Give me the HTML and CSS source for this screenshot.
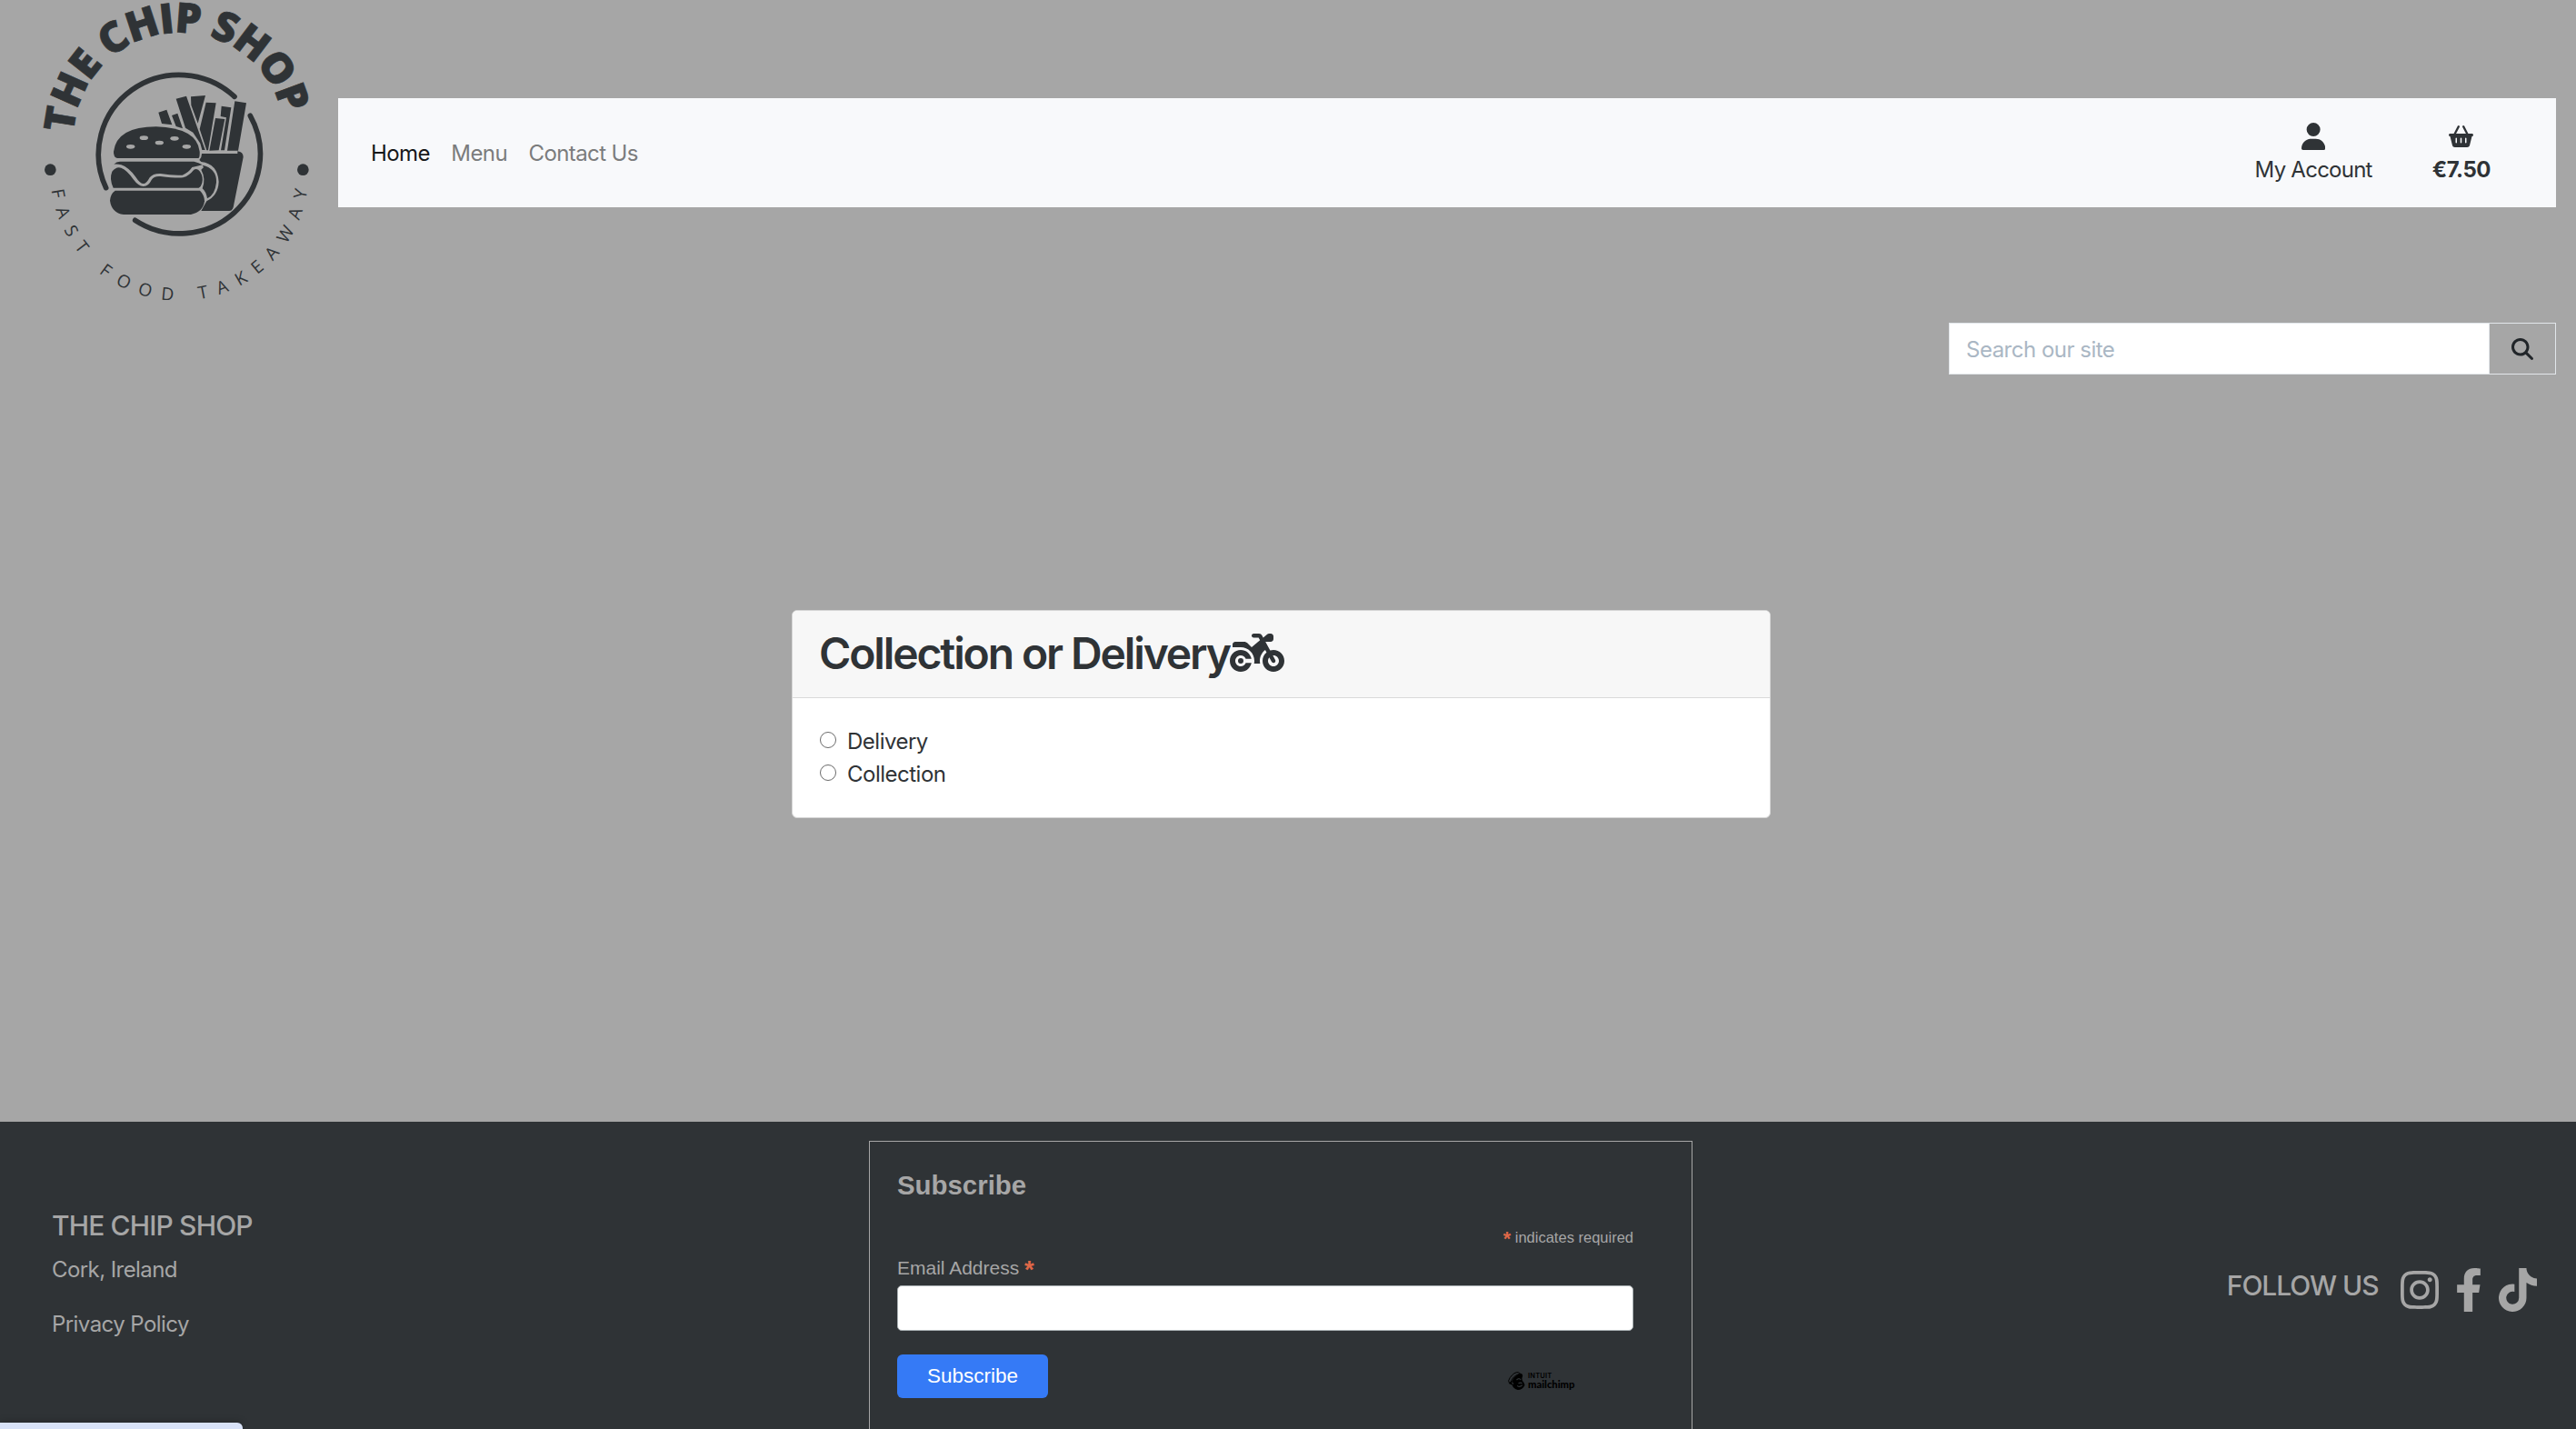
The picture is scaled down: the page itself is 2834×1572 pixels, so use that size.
FILE: index.html
```html
<!DOCTYPE html>
<html lang="en">
<head>
<meta charset="utf-8">
<title>The Chip Shop</title>
<link rel="stylesheet" href="styles.css">
</head>
<body>
<header class="site-header">
  <a class="logo" href="#">
    <svg viewBox="0 0 1116 1050" width="372" height="350" role="img" aria-label="The Chip Shop">
      <defs>
        <path id="arc-top" d="M243 457 A349 349 0 0 1 941 457"/>
        <path id="arc-bottom" d="M165 566 A427 427 0 0 0 1019 566"/>
      </defs>
      <text class="logo-name" textLength="1001"><textPath href="#arc-top" startOffset="16">THE CHIP SHOP</textPath></text>
      <text class="logo-tag" textLength="1218"><textPath href="#arc-bottom" startOffset="61">FAST FOOD TAKEAWAY</textPath></text>
      <circle class="ink" cx="166" cy="560" r="19"/>
      <circle class="ink" cx="1000" cy="560" r="19"/>
      <g class="ring">
        <path d="M350 620 A266 262 0 0 1 774 319"/>
        <path d="M826 382 A266 262 0 0 1 446 727"/>
      </g>
      <g class="ink">
        <path d="M523 371l27-9 18 50-34-4zM567 381l19-7 17 50-22-7zM581 326l34-9 62 178-10 0-6-22-24-36-25-15zM630 319l48-4-25 92-22-60zM680 338l33 2-26 156-5 0-23-70zM711 390l31 3-20 103-31 1zM731 350l32 5-22 141-12 0 18-108-19-4zM775 334l38 6-27 157-36 0z"/>
        <path d="M666 507H784V499Q803 502 803 518L770 684Q767 696 757 696H664L682 664Q720 645 722 600Q718 540 664 534L658 528Q666 520 666 507z"/>
        <path d="M668 545Q716 556 714 602Q710 642 684 655Q680 632 668 622Q680 590 664 560L672 552z"/>
        <path d="M387 522Q374 518 375 500Q386 418 515 418Q650 422 659 500Q660 518 655 522z"/>
        <path d="M376 542Q384 533 396 533H640Q656 536 668 544Q656 547 634 552Q622 570 602 578Q570 580 530 573Q505 572 494 586Q482 608 474 606Q462 606 448 584Q424 552 400 544Q388 541 376 542z"/>
        <path d="M374 620Q360 590 370 566Q384 548 400 554Q420 562 440 592Q458 616 474 615Q490 615 500 594Q508 580 530 582Q580 588 604 586Q624 580 640 560Q652 554 660 566Q672 584 667 604Q664 616 656 620z"/>
        <path d="M380 629H660Q675 644 675 664Q670 700 630 708H408Q368 702 363 662Q364 640 380 629z"/>
      </g>
      <g class="seeds">
        <ellipse cx="475" cy="455" rx="14" ry="7"/>
        <ellipse cx="526" cy="471" rx="14" ry="7"/>
        <ellipse cx="576" cy="457" rx="14" ry="7"/>
        <ellipse cx="431" cy="484" rx="14" ry="7"/>
        <ellipse cx="616" cy="484" rx="14" ry="7"/>
      </g>
    </svg>
  </a>
  <nav class="navbar">
    <ul class="nav-links">
      <li><a class="nav-link active" href="#">Home</a></li>
      <li><a class="nav-link" href="#">Menu</a></li>
      <li><a class="nav-link" href="#">Contact Us</a></li>
    </ul>
    <a class="nav-tool account" href="#">
      <svg viewBox="0 0 448 512" width="26.25" height="30"><path d="M224 256A128 128 0 1 0 224 0a128 128 0 1 0 0 256zm-45.7 48C79.8 304 0 383.8 0 482.3C0 498.7 13.3 512 29.7 512H418.3c16.4 0 29.7-13.3 29.7-29.7C448 383.8 368.2 304 269.7 304H178.3z"/></svg>
      <span>My Account</span>
    </a>
    <a class="nav-tool basket" href="#">
      <svg viewBox="0 0 576 512" width="27" height="24"><path d="M253.3 35.1c6.1-11.8 1.5-26.3-10.2-32.4s-26.3-1.5-32.4 10.2L117.6 192H32c-17.7 0-32 14.3-32 32s14.3 32 32 32L83.9 463.5C91 492 116.6 512 146 512H430c29.4 0 55-20 62.1-48.5L544 256c17.7 0 32-14.3 32-32s-14.3-32-32-32H458.4L365.3 12.9C359.2 1.2 344.7-3.4 332.9 2.7s-16.3 20.6-10.2 32.4L404.3 192H171.7L253.3 35.1zM192 304v96c0 8.8-7.2 16-16 16s-16-7.2-16-16V304c0-8.8 7.2-16 16-16s16 7.2 16 16zm96-16c8.8 0 16 7.2 16 16v96c0 8.8-7.2 16-16 16s-16-7.2-16-16V304c0-8.8 7.2-16 16-16zm128 16v96c0 8.8-7.2 16-16 16s-16-7.2-16-16V304c0-8.8 7.2-16 16-16s16 7.2 16 16z"/></svg>
      <strong>€7.50</strong>
    </a>
  </nav>
</header>
<form class="search">
  <input class="search-input" type="text" placeholder="Search our site">
  <button class="search-btn" type="button" aria-label="Search">
    <svg viewBox="0 0 512 512" width="24" height="24"><path d="M416 208c0 45.9-14.9 88.3-40 122.7L502.6 457.4c12.5 12.5 12.5 32.8 0 45.3s-32.8 12.5-45.3 0L330.7 376c-34.4 25.2-76.8 40-122.7 40C93.1 416 0 322.9 0 208S93.1 0 208 0S416 93.1 416 208zM208 352a144 144 0 1 0 0-288 144 144 0 1 0 0 288z"/></svg>
  </button>
</form>
<main class="content">
  <section class="card">
    <div class="card-header">
      <h1>Collection or Delivery</h1>
      <svg viewBox="0 0 640 512" width="60" height="48"><path d="M280 32c-13.3 0-24 10.7-24 24s10.7 24 24 24h57.7l16.4 30.3L256 192l-45.3-45.3c-12-12-28.3-18.7-45.3-18.7H64c-17.7 0-32 14.3-32 32v32h96c88.4 0 160 71.6 160 160c0 11-1.1 21.7-3.2 32h70.4c-2.1-10.3-3.2-21-3.2-32c0-52.2 25-98.6 63.7-127.8l15.4 28.6C402.4 276.3 384 312 384 352c0 70.7 57.3 128 128 128s128-57.3 128-128s-57.3-128-128-128c-13.5 0-26.5 2.1-38.7 6L418.2 128H480c17.7 0 32-14.3 32-32V64c0-17.7-14.3-32-32-32H459.6c-7.5 0-14.7 2.6-20.5 7.4L391.7 78.9l-14-26c-7-12.9-20.5-21-35.2-21H280zM462.7 311.2l28.2 52.2c6.3 11.7 20.9 16 32.5 9.7s16-20.9 9.7-32.5l-28.2-52.2c2.3-.3 4.7-.4 7.1-.4c35.3 0 64 28.7 64 64s-28.7 64-64 64s-64-28.7-64-64c0-15.5 5.5-29.7 14.7-40.8zM187.3 376c-9.5 23.5-32.5 40-59.3 40c-35.3 0-64-28.7-64-64s28.7-64 64-64c26.9 0 49.9 16.5 59.3 40h66.4C242.5 268.8 190.5 224 128 224C57.3 224 0 281.3 0 352s57.3 128 128 128c62.5 0 114.5-44.8 125.8-104H187.3zM128 384a32 32 0 1 0 0-64 32 32 0 1 0 0 64z"/></svg>
    </div>
    <div class="card-body">
      <label class="option"><input type="radio" name="method"><span>Delivery</span></label>
      <label class="option"><input type="radio" name="method"><span>Collection</span></label>
    </div>
  </section>
</main>
<footer class="footer">
  <div class="about">
    <h2>THE CHIP SHOP</h2>
    <p>Cork, Ireland</p>
    <p><a href="#">Privacy Policy</a></p>
  </div>
  <form class="signup">
    <h2>Subscribe</h2>
    <p class="required"><span class="star">*</span> indicates required</p>
    <label class="email-label" for="email">Email Address <span class="star">*</span></label>
    <input class="email-input" id="email" type="email">
    <div class="signup-actions">
      <button class="signup-btn" type="button">Subscribe</button>
      <a class="mailchimp" href="#">
        <svg viewBox="0 0 56 60" width="19" height="20">
          <path d="M4 38Q-2 30 6 20Q20 0 34 2Q42 4 34 9Q16 14 9 34z" fill="none" stroke="#000" stroke-width="3"/>
          <path d="M12 32Q20 14 40 5Q52 6 46 20Q44 28 52 36L55 44Q48 60 32 60Q16 56 14 44L4 40Q4 34 12 32z"/>
          <path d="M28 27Q36 19 42 27M34 38Q42 35 46 38M30 46Q38 53 47 44M12 37Q16 35 16 41" fill="none" stroke="#2f3336" stroke-width="3.5"/>
        </svg>
        <span class="wordmark"><span class="intuit">INTUIT</span><span class="chimp">mailchimp</span></span>
      </a>
    </div>
  </form>
  <div class="social">
    <h2>FOLLOW US</h2>
    <a class="instagram" href="#" aria-label="Instagram"><svg viewBox="0 0 448 512" width="42" height="48"><path d="M224.1 141c-63.6 0-114.9 51.3-114.9 114.9s51.3 114.9 114.9 114.9S339 319.5 339 255.9 287.7 141 224.1 141zm0 189.6c-41.1 0-74.7-33.5-74.7-74.7s33.5-74.7 74.7-74.7 74.7 33.5 74.7 74.7-33.6 74.7-74.7 74.7zm146.4-194.3c0 14.9-12 26.8-26.8 26.8-14.9 0-26.8-12-26.8-26.8s12-26.8 26.8-26.8 26.8 12 26.8 26.8zm76.1 27.2c-1.7-35.9-9.9-67.7-36.2-93.9-26.2-26.2-58-34.4-93.9-36.2-37-2.1-147.9-2.1-184.9 0-35.8 1.7-67.6 9.9-93.9 36.1s-34.4 58-36.2 93.9c-2.1 37-2.1 147.9 0 184.9 1.7 35.9 9.9 67.7 36.2 93.9s58 34.4 93.9 36.2c37 2.1 147.9 2.1 184.9 0 35.9-1.7 67.7-9.9 93.9-36.2 26.2-26.2 34.4-58 36.2-93.9 2.1-37 2.1-147.8 0-184.8zM398.8 388c-7.8 19.6-22.9 34.7-42.6 42.6-29.5 11.7-99.5 9-132.1 9s-102.7 2.6-132.1-9c-19.6-7.8-34.7-22.9-42.6-42.6-11.7-29.5-9-99.5-9-132.1s-2.6-102.7 9-132.1c7.8-19.6 22.9-34.7 42.6-42.6 29.5-11.7 99.5-9 132.1-9s102.7-2.6 132.1 9c19.6 7.8 34.7 22.9 42.6 42.6 11.7 29.5 9 99.5 9 132.1s2.7 102.7-9 132.1z"/></svg></a>
    <a class="facebook" href="#" aria-label="Facebook"><svg viewBox="0 0 320 512" width="30" height="48"><path d="M279.14 288l14.22-92.66h-88.91v-60.13c0-25.35 12.42-50.06 52.24-50.06h40.42V6.26S260.43 0 225.36 0c-73.22 0-121.08 44.38-121.08 124.72v70.62H22.89V288h81.39v224h100.17V288z"/></svg></a>
    <a class="tiktok" href="#" aria-label="TikTok"><svg viewBox="0 0 448 512" width="42" height="48"><path d="M448 209.9a210.1 210.1 0 0 1-122.8-39.3V349.4A162.6 162.6 0 1 1 185 188.3V278.2a74.6 74.6 0 1 0 52.2 71.2V0l88 0a121.2 121.2 0 0 0 1.9 22.2h0A122.2 122.2 0 0 0 381 102.4a121.4 121.4 0 0 0 67 20.1z"/></svg></a>
  </div>
</footer>
<div class="status-bubble"></div>
</body>
</html>
```
FILE: styles.css
```css
* { box-sizing: border-box; }
body {
  margin: 0;
  height: 1572px;
  overflow: hidden;
  position: relative;
  display: flex;
  flex-direction: column;
  background: #a6a6a6;
  color: #2f3336;
  font: 24px/36px Inter, "Liberation Sans", sans-serif;
  letter-spacing: -.5px;
}
h1, h2, p, ul { margin: 0; padding: 0; font-weight: 400; }
ul { list-style: none; }
a { color: inherit; text-decoration: none; }
svg { display: block; fill: currentColor; flex: none; }

/* Header */
.site-header { display: flex; height: 355px; }
.logo { width: 372px; flex: none; letter-spacing: 0; }
.logo svg { overflow: visible; }
.ink, .logo-name, .logo-tag { fill: #2f3336; }
.logo-name { font: 800 138px "Open Sans", sans-serif; stroke: #2f3336; stroke-width: 2; }
.logo-tag { font: 400 58px "Open Sans", sans-serif; }
.ring { fill: none; stroke: #2f3336; stroke-width: 17; stroke-linecap: round; }
.seeds { fill: #a6a6a6; }
.navbar {
  display: flex;
  flex: 1;
  height: 120px;
  margin: 108px 22px 0 0;
  padding: 0 72px 0 36px;
  background: #f8f9fb;
}
.nav-links { display: flex; flex: 1; align-items: center; gap: 23.5px; padding-top: 2px; }
.nav-link { display: block; color: #7b7c7d; letter-spacing: -.6px; }
.nav-link.active { color: #17181a; }
.nav-tool { display: flex; flex-direction: column; align-items: center; justify-content: flex-end; padding-bottom: 23px; }
.nav-tool svg { margin-bottom: 4px; }
.nav-tool.basket svg { margin-bottom: 7px; }
.account { margin-right: 66px; letter-spacing: -.75px; }

/* Search */
.search { display: flex; align-self: flex-end; width: 668px; height: 57px; margin-right: 22px; flex: none; }
.search-input {
  width: 595px;
  border: 1px solid #e2e6ea;
  padding: 2px 18px 0;
  background: #fff;
  font: inherit;
  letter-spacing: inherit;
}
.search-input::placeholder { color: #aab7c4; opacity: 1; }
.search-btn {
  flex: 1;
  display: flex;
  align-items: center;
  justify-content: center;
  padding: 0;
  border: 1px solid #e2e6ea;
  border-left: 0;
  background: none;
  color: #212529;
}

/* Order method card */
.content { flex: 1; padding: 259px 0 0 871px; }
.card { width: 1077px; height: 229px; border: 1px solid #d6d6d6; border-radius: 6px; background: #fff; overflow: hidden; }
.card-header { display: flex; height: 96px; padding: 18px 30px; background: #f7f7f7; border-bottom: 1px solid #d9d9d9; }
.card-header h1 { font-size: 48px; line-height: 58px; font-weight: 600; letter-spacing: -2.12px; margin-left: -1px; }
.card-header svg { margin-top: 4px; }
.card-body { padding: 30px; }
.option { display: flex; height: 36px; align-items: flex-start; }
.option input {
  appearance: none;
  width: 18px;
  height: 18px;
  margin: 7px 12px 0 0;
  border: 1px solid #6a6a6a;
  border-radius: 50%;
  background: #fff;
}

/* Footer */
.footer { display: flex; height: 338px; background: #2f3336; color: #a6a6a6; overflow: hidden; }
.about { width: 956px; padding: 96px 0 0 57px; }
.about h2 { font-size: 30px; line-height: 36px; margin-bottom: 13px; font-weight: 500; letter-spacing: -.85px; }
.about p { margin-bottom: 24px; letter-spacing: -.57px; }
.signup {
  width: 906px;
  height: 340px;
  margin-top: 21px;
  padding: 0 64px 0 30px;
  border: 1px solid #a6a6a6;
  font: 21px/24px "Liberation Sans", Arial, sans-serif;
  letter-spacing: 0;
}
.signup h2 { margin-top: 30px; font-size: 29.4px; line-height: 36px; font-weight: 700; }
.required { margin-top: 29px; font-size: 16.5px; line-height: 20px; text-align: right; }
.star { color: #e06848; font-size: 1.3em; line-height: 0; font-weight: 700; vertical-align: -.15em; }
.email-label { display: block; margin: 12px 0 7px; }
.email-input { display: block; width: 810px; height: 50px; border: 1px solid #a9b0b3; border-radius: 5px; background: #fff; }
.signup-actions { display: flex; margin-top: 26px; }
.signup-btn {
  width: 166px;
  height: 48px;
  padding: 0 0 1px;
  border: 0;
  border-radius: 6px;
  background: #357af6;
  color: #fff;
  font: 22.5px/30px "Liberation Sans", Arial, sans-serif;
}
.mailchimp { display: flex; margin: 19px 0 0 506px; color: #000; }
.wordmark { display: flex; flex-direction: column; margin: 1px 0 0 3px; }
.intuit { font: 600 7.5px/8px Inter, sans-serif; letter-spacing: .2px; }
.chimp { font: 900 11.2px/9px Lato, sans-serif; }
.social { display: flex; flex: 1; padding: 161px 43px 0 0; justify-content: flex-end; }
.social h2 { margin: 1px 24px 0 0; font-size: 30px; line-height: 36px; font-weight: 500; letter-spacing: -1.05px; }
.facebook { margin: 0 18.5px 0 18px; }

/* Browser link status */
.status-bubble {
  position: absolute;
  left: 0;
  bottom: 0;
  width: 267px;
  height: 7px;
  border-radius: 0 6px 0 0;
  background: #d8e2f8;
  box-shadow: 0 0 8px rgba(0, 0, 0, .3);
}
```
